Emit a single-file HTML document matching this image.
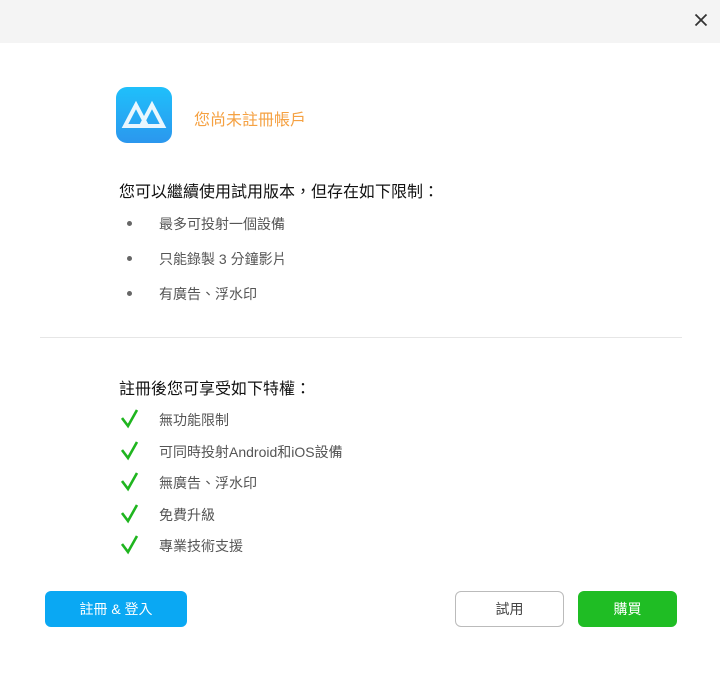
<!DOCTYPE html>
<html><head><meta charset="utf-8"><style>
*{margin:0;padding:0;box-sizing:border-box}
body{width:720px;height:677px;background:#fff;font-family:"Liberation Sans","Noto Sans CJK TC",sans-serif;position:relative;overflow:hidden;color:#333}
.top{position:absolute;left:0;top:0;width:720px;height:43px;background:#f4f4f4}
.a{position:absolute;white-space:nowrap}
.li{font-size:14px;color:#555}
.dot{position:absolute;width:5px;height:5px;border-radius:50%;background:#666}
.btn{position:absolute;height:36px;border-radius:6px;font-size:14px;text-align:center;line-height:36px}
</style></head><body>
<div class="top"></div>
<svg class="a" style="left:694px;top:13px" width="14" height="14" viewBox="0 0 14 14"><path d="M1.5 1.5L12.5 12.5M12.5 1.5L1.5 12.5" stroke="#333" stroke-width="1.8"/></svg>
<svg class="a" style="left:116px;top:87px" width="56" height="56" viewBox="0 0 56 56"><defs><linearGradient id="g" x1="0" y1="0" x2="0" y2="1"><stop offset="0" stop-color="#1fc0fb"/><stop offset="1" stop-color="#2b97ee"/></linearGradient></defs><rect width="56" height="56" rx="11" fill="url(#g)"/><path d="M9 39L20 18L31 39Z M25 39L36 18L47 39Z" fill="none" stroke="#fff" stroke-width="4" stroke-linejoin="miter" opacity=".9"/></svg>
<div class="a" style="left:194px;top:106px;font-size:16px;color:#f5a142">您尚未註冊帳戶</div>
<div class="a" style="left:119px;top:178px;font-size:16px;color:#111">您可以繼續使用試用版本，但存在如下限制：</div>
<div class="dot" style="left:127px;top:221px"></div><div class="a li" style="left:159px;top:214px">最多可投射一個設備</div>
<div class="dot" style="left:127px;top:256px"></div><div class="a li" style="left:159px;top:249px">只能錄製 3 分鐘影片</div>
<div class="dot" style="left:127px;top:291px"></div><div class="a li" style="left:159px;top:284px">有廣告、浮水印</div>
<div class="a" style="left:40px;top:337px;width:642px;height:1px;background:#e6e6e6"></div>
<div class="a" style="left:119px;top:375px;font-size:16px;color:#111">註冊後您可享受如下特權：</div>
<svg class="a" style="left:121px;top:409px" width="18" height="150" viewBox="0 0 18 150">
<g fill="none" stroke="#1fb51f" stroke-width="2.6"><path d="M1 9L7 17L16 1"/><path d="M1 41L7 49L16 33"/><path d="M1 72L7 80L16 64"/><path d="M1 104L7 112L16 96"/><path d="M1 135L7 143L16 127"/></g></svg>
<div class="a li" style="left:159px;top:410px">無功能限制</div>
<div class="a li" style="left:159px;top:442px">可同時投射Android和iOS設備</div>
<div class="a li" style="left:159px;top:473px">無廣告、浮水印</div>
<div class="a li" style="left:159px;top:505px">免費升級</div>
<div class="a li" style="left:159px;top:536px">專業技術支援</div>
<div class="btn" style="left:45px;top:591px;width:142px;background:#0aa8f3;color:#fff">註冊 &amp; 登入</div>
<div class="btn" style="left:455px;top:591px;width:109px;border:1px solid #bbb;color:#444;line-height:34px">試用</div>
<div class="btn" style="left:578px;top:591px;width:99px;background:#1fbd24;color:#fff">購買</div>
</body></html>
